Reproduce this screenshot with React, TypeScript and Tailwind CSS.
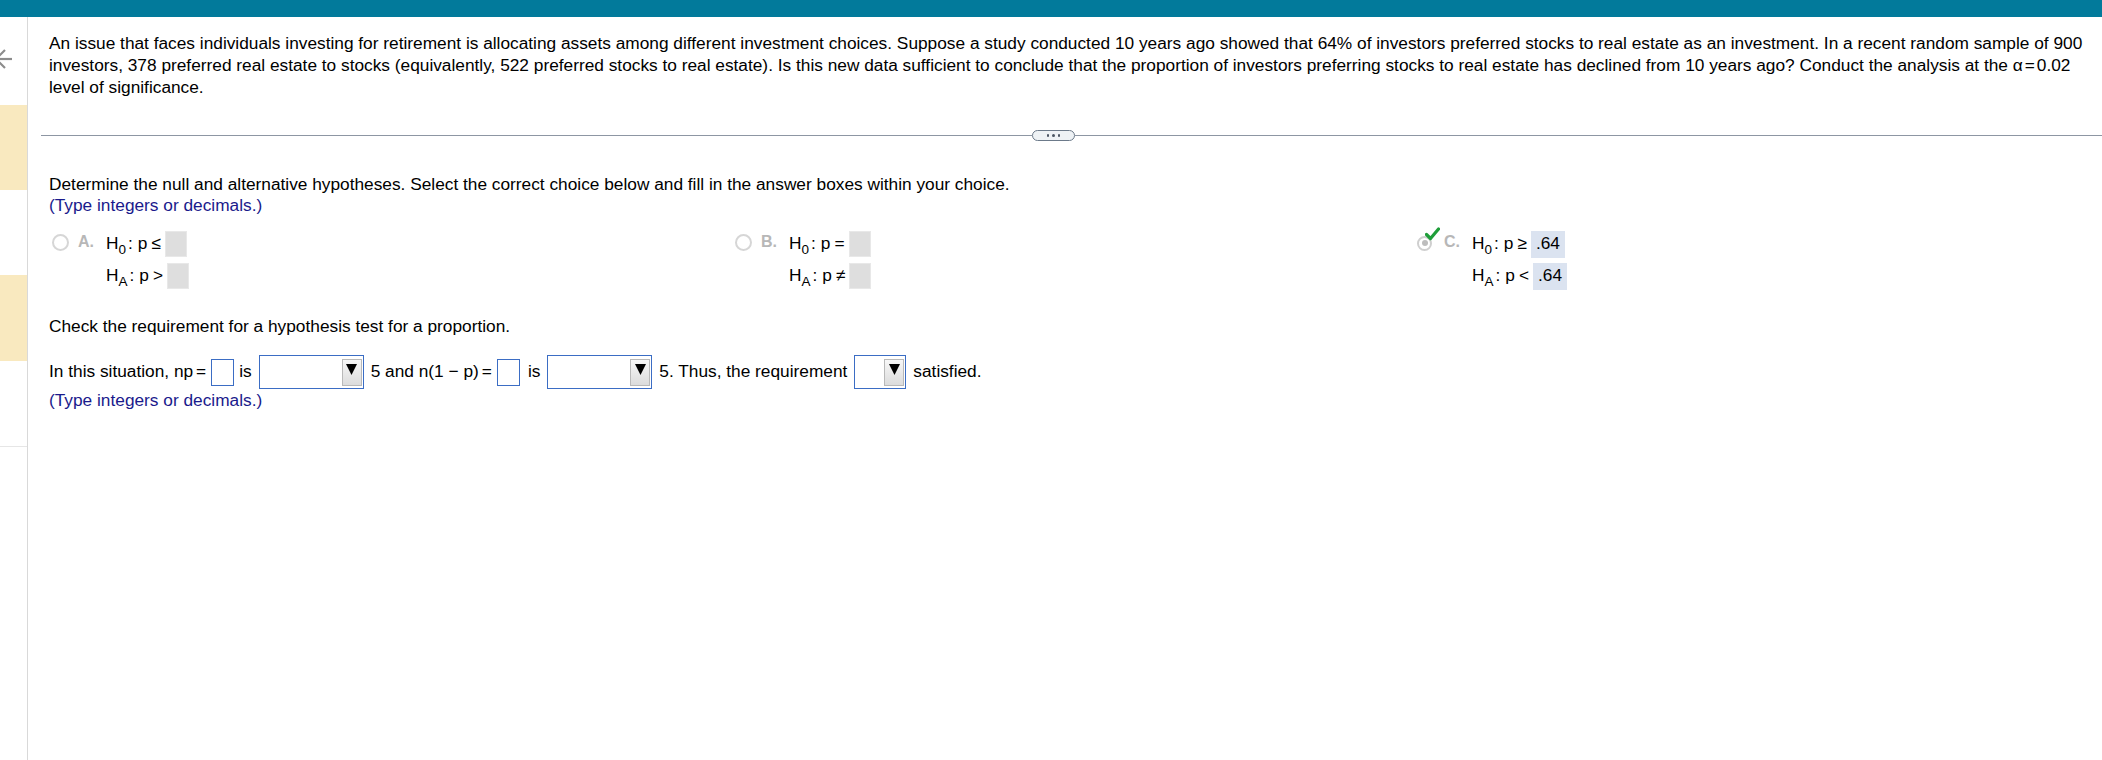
import React from 'react';

const navy = 'text-[#1a1a8c]';

function Sub({ children }: { children: React.ReactNode }) {
  return <span className="relative top-[5px] text-[13.5px] leading-none">{children}</span>;
}

function GrayBox() {
  return <span className="inline-block h-[26px] w-[22px] border border-[#e8e8e8] bg-[#dedede]" />;
}

function AnswerBox({ value }: { value: string }) {
  return (
    <span className="inline-flex h-[27px] items-center bg-[#dbe3f0] px-[5px] text-[17.3px] text-black">
      {value}
    </span>
  );
}

function Radio() {
  return <span className="inline-block h-[17px] w-[17px] rounded-full border-2 border-[#d6d6d6] bg-white" />;
}

function CheckedRadio() {
  return (
    <span className="relative inline-block h-[17px] w-[22px]">
      <span className="absolute left-0 top-[2px] h-[15px] w-[15px] rounded-full border-2 border-[#cfcfcf] bg-white">
        <span className="absolute left-[2.5px] top-[2.5px] h-[6px] w-[6px] rounded-full bg-[#bdbdbd]" />
      </span>
      <svg className="absolute left-[8px] top-[-7px]" width="15" height="14" viewBox="0 0 15 14">
        <path d="M1.5 7.5 L5.5 11.5 L13.5 2" fill="none" stroke="#1f9e3a" strokeWidth="3.2" strokeLinecap="round" strokeLinejoin="round" />
      </svg>
    </span>
  );
}

function Hyp({ label, op, box }: { label: 'H0' | 'HA'; op: string; box: React.ReactNode }) {
  return (
    <div className="flex h-[26px] items-center text-[17.3px] text-black">
      <span>
        H<Sub>{label === 'H0' ? '0' : 'A'}</Sub>
      </span>
      <span className="ml-[2px]">:</span>
      <span className="ml-[5px]">p</span>
      <span className="ml-[4px] mr-[4px]">{op}</span>
      {box}
    </div>
  );
}

function Option({
  letter,
  h0,
  ha,
  checked,
  b0,
  b1,
}: {
  letter: string;
  h0: string;
  ha: string;
  checked?: boolean;
  b0: React.ReactNode;
  b1: React.ReactNode;
}) {
  return (
    <div className="flex items-start">
      <div className="flex h-[22px] items-center">
        {checked ? <CheckedRadio /> : <Radio />}
        <span className={`${checked ? 'ml-[5px]' : 'ml-[9px]'} text-[16px] font-bold text-[#b7b7b7]`}>{letter}.</span>
      </div>
      <div className="ml-[12px] flex flex-col gap-[6px]">
        <Hyp label="H0" op={h0} box={b0} />
        <Hyp label="HA" op={ha} box={b1} />
      </div>
    </div>
  );
}

function InputBox() {
  return <span className="mx-[5px] inline-block h-[27px] w-[23px] border-[1.5px] border-[#3b6dc4] bg-white" />;
}

function Dropdown({ width }: { width: string }) {
  return (
    <span className={`mx-[7px] inline-flex h-[34px] ${width} items-center justify-end border-[1.5px] border-[#3b6dc4] bg-white pr-[1px]`}>
      <span className="flex h-[27px] w-[20px] justify-center border border-[#b9b9b9] bg-gradient-to-b from-[#f7f7f7] to-[#dcdcdc] pt-[4px]">
        <svg width="11" height="11" viewBox="0 0 11 11">
          <polygon points="0,0 11,0 5.5,11" fill="#000" />
        </svg>
      </span>
    </span>
  );
}

export default function App() {
  return (
    <div className="flex h-[760px] w-[2102px] flex-col overflow-hidden bg-white font-[Liberation_Sans,Arial,sans-serif] text-black">
      <div className="h-[17px] shrink-0 bg-[#027a9b]" />
      <div className="flex flex-1">
        {/* sidebar */}
        <div className="flex w-[28px] shrink-0 flex-col border-r border-[#d9d9d9]">
          <svg className="mt-[28px]" width="27" height="30" viewBox="0 0 27 30">
            <path d="M-2 14 H12" stroke="#8c8c8c" strokeWidth="2.2" />
            <path d="M5 5 L-4 14 L5 23" fill="none" stroke="#8c8c8c" strokeWidth="2.2" />
          </svg>
          <div className="mt-[30px] h-[85px] bg-[#f9e9bf]" />
          <div className="h-[85px]" />
          <div className="h-[86px] bg-[#f9e9bf]" />
          <div className="h-[86px] border-b border-[#e6e6e6]" />
        </div>

        {/* main */}
        <div className="flex-1 pl-[13px]">
          <p className="ml-[8px] whitespace-nowrap pt-[15px] text-[17.3px] leading-[22px]">
            An issue that faces individuals investing for retirement is allocating assets among different investment choices. Suppose a study conducted 10 years ago showed that 64% of investors preferred stocks to real estate as an investment. In a recent random sample of 900
            <br />
            investors, 378 preferred real estate to stocks (equivalently, 522 preferred stocks to real estate). Is this new data sufficient to conclude that the proportion of investors preferring stocks to real estate has declined from 10 years ago? Conduct the analysis at the α<span className="mx-[2px]">=</span>0.02
            <br />
            level of significance.
          </p>

          <div className="mt-[32px] flex h-[11px] items-center">
            <div className="h-[1.5px] w-[991px] bg-[#8d96a3]" />
            <div className="flex h-[11px] w-[43px] shrink-0 items-center justify-center gap-[3px] rounded-full border border-[#6c7a8a] bg-[#eef2f5]">
              <span className="h-[2.5px] w-[2.5px] rounded-full bg-[#4b5563]" />
              <span className="h-[2.5px] w-[2.5px] rounded-full bg-[#4b5563]" />
              <span className="h-[2.5px] w-[2.5px] rounded-full bg-[#4b5563]" />
            </div>
            <div className="h-[1.5px] flex-1 bg-[#8d96a3]" />
          </div>

          <div className="ml-[8px] mt-[33px] text-[17.3px] leading-[21px]">
            <p>Determine the null and alternative hypotheses. Select the correct choice below and fill in the answer boxes within your choice.</p>
            <p className={navy}>(Type integers or decimals.)</p>
          </div>

          <div className="ml-[11px] mt-[15px] grid w-[2049px] grid-cols-3">
            <Option letter="A" h0="≤" ha=">" b0={<GrayBox />} b1={<GrayBox />} />
            <Option letter="B" h0="=" ha="≠" b0={<GrayBox />} b1={<GrayBox />} />
            <div className="-ml-[1px]">
              <Option letter="C" h0="≥" ha="<" checked b0={<AnswerBox value=".64" />} b1={<AnswerBox value=".64" />} />
            </div>
          </div>

          <p className="ml-[8px] mt-[27px] text-[17.3px] leading-[21px]">Check the requirement for a hypothesis test for a proportion.</p>

          <div className="ml-[8px] mt-[18px] flex items-center text-[17.3px]">
            <span>
              In this situation, np<span className="ml-[3px]">=</span>
            </span>
            <InputBox />
            <span>is</span>
            <Dropdown width="w-[105px]" />
            <span>
              5 and n(1 − p)<span className="ml-[3px]">=</span>
            </span>
            <InputBox />
            <span className="ml-[3px]">is</span>
            <Dropdown width="w-[105px]" />
            <span>5. Thus, the requirement</span>
            <Dropdown width="w-[52px]" />
            <span>satisfied.</span>
          </div>
          <p className={`ml-[8px] mt-[1px] text-[17.3px] leading-[21px] ${navy}`}>(Type integers or decimals.)</p>
        </div>
      </div>
    </div>
  );
}
